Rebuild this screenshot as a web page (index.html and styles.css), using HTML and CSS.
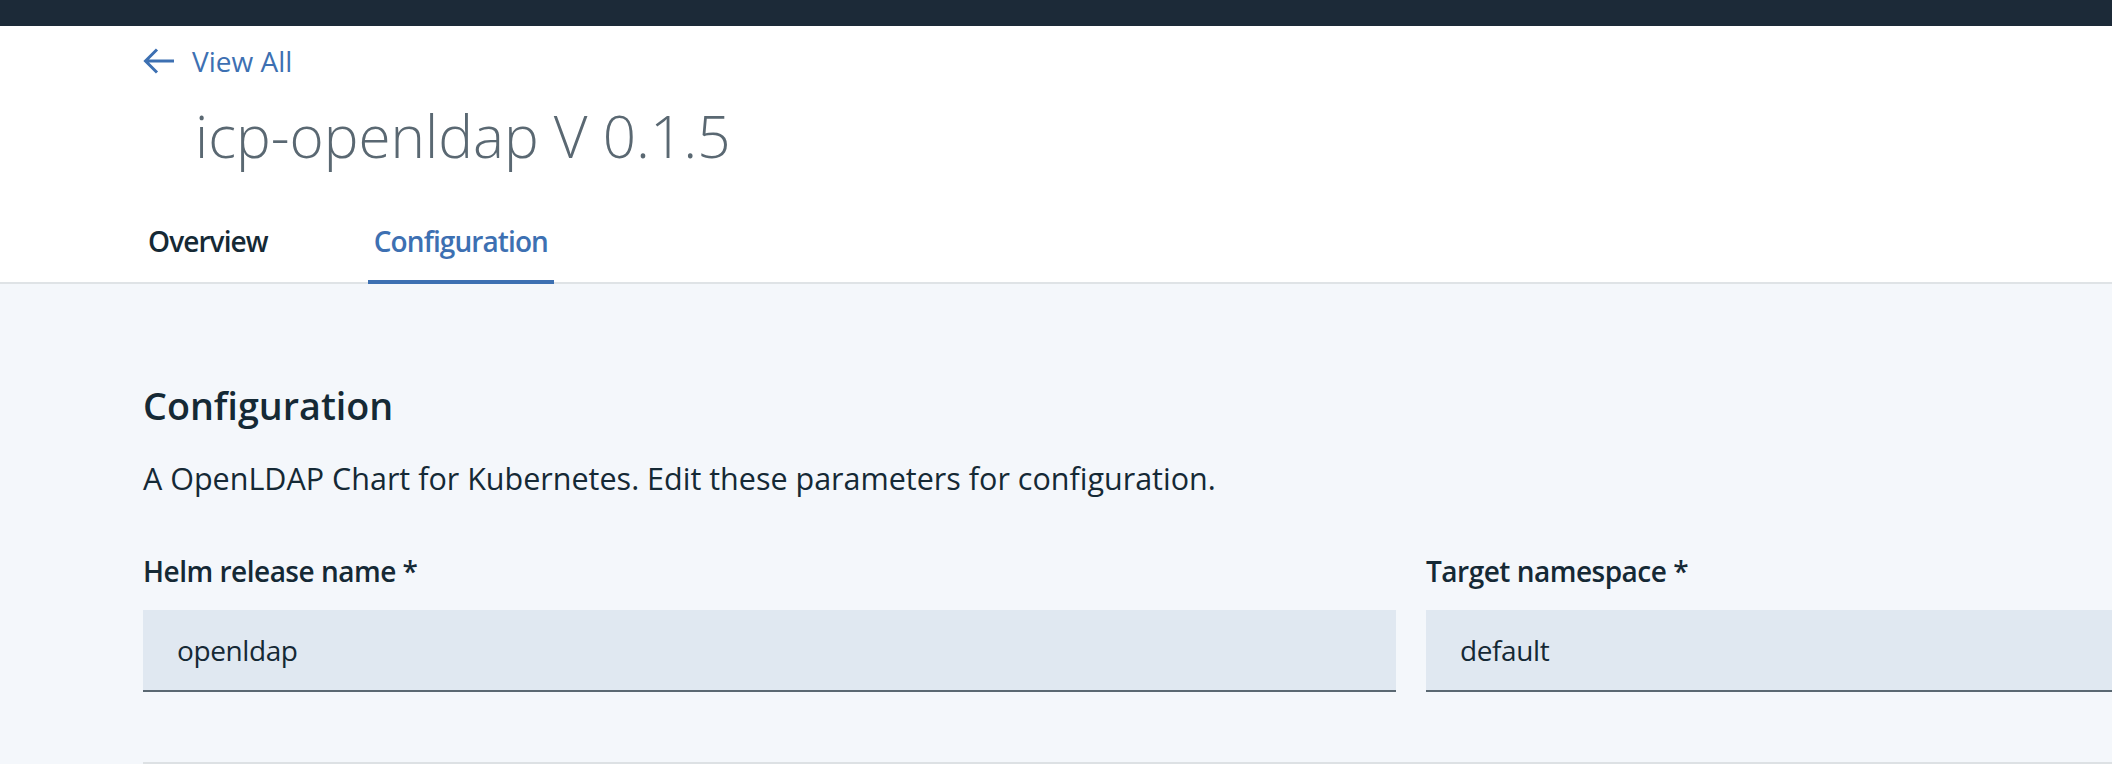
FILE: index.html
```html
<!DOCTYPE html>
<html lang="en">
<head>
<meta charset="utf-8">
<title>icp-openldap V 0.1.5</title>
<link rel="stylesheet" href="styles.css">
</head>
<body>
<div class="masthead"></div>
<header class="page-header">
  <a class="back-link" href="#">
    <svg class="back-icon" width="32" height="28" viewBox="0 0 32 28" aria-hidden="true">
      <path d="M15 2.5 L3.5 14 L15 25.5 M3.5 14 H32" fill="none" stroke="#3d70b2" stroke-width="3"/>
    </svg>
    <span>View All</span>
  </a>
  <h1 class="title">icp-openldap V 0.1.5</h1>
  <nav class="tabs">
    <a class="tab" href="#">Overview</a>
    <a class="tab tab-active" href="#">Configuration</a>
  </nav>
</header>
<main class="content">
  <h2 class="section-title">Configuration</h2>
  <p class="section-desc">A OpenLDAP Chart for Kubernetes. Edit these parameters for configuration.</p>
  <div class="field-row">
    <div class="field">
      <label class="field-label">Helm release name *</label>
      <div class="field-input">openldap</div>
    </div>
    <div class="field">
      <label class="field-label">Target namespace *</label>
      <div class="field-input">default</div>
    </div>
  </div>
  <div class="next-section"></div>
</main>
</body>
</html>
```
FILE: styles.css
```css
html, body {
  margin: 0;
  padding: 0;
  overflow: hidden;
  width: 2112px;
  height: 764px;
}
body {
  font-family: "Open Sans", "Liberation Sans", sans-serif;
  background: #f4f7fb;
  color: #152935;
}
.masthead {
  height: 26px;
  background: #1c2a38;
}
.page-header {
  background: #ffffff;
  border-bottom: 2px solid #dfe3e6;
  padding-left: 142px;
}
.back-link {
  display: flex;
  align-items: center;
  gap: 18px;
  padding-top: 15px;
  height: 40px;
  line-height: 40px;
  font-size: 28px;
  color: #3d70b2;
  text-decoration: none;
  width: max-content;
}
.back-icon {
  display: block;
}
.title {
  margin: 22.8px 0 0 53px;
  font-size: 58.4px;
  line-height: 64px;
  font-weight: 300;
  color: #5a6872;
}
.tabs {
  display: flex;
  margin-top: 53.4px;
  margin-bottom: -2px;
}
.tab {
  display: block;
  font-size: 28px;
  line-height: 40px;
  font-weight: 600;
  letter-spacing: -0.9px;
  color: #152935;
  text-decoration: none;
  padding: 0 6px 19px;
  border-bottom: 4px solid transparent;
}
.tab + .tab {
  margin-left: 94px;
}
.tab-active {
  color: #3d70b2;
  border-bottom-color: #3d70b2;
}
.content {
  padding: 97.4px 0 0 143px;
}
.section-title {
  margin: 0;
  font-size: 37.7px;
  line-height: 48px;
  font-weight: 600;
}
.section-desc {
  margin: 28.8px 0 0;
  font-size: 30.5px;
  line-height: 40px;
}
.field-row {
  display: flex;
  gap: 30px;
  margin-top: 52.9px;
}
.field {
  flex: 0 0 1253px;
}
.field-label {
  display: block;
  font-size: 28px;
  line-height: 40px;
  font-weight: 600;
  letter-spacing: -0.5px;
}
.field-input {
  margin-top: 19px;
  height: 80px;
  line-height: 80px;
  padding-left: 34px;
  font-size: 28px;
  letter-spacing: -0.4px;
  background: #e0e8f1;
  border-bottom: 2px solid #5a6872;
}
.next-section {
  margin-top: 70px;
  border-top: 2px solid #dde1e4;
}
```
